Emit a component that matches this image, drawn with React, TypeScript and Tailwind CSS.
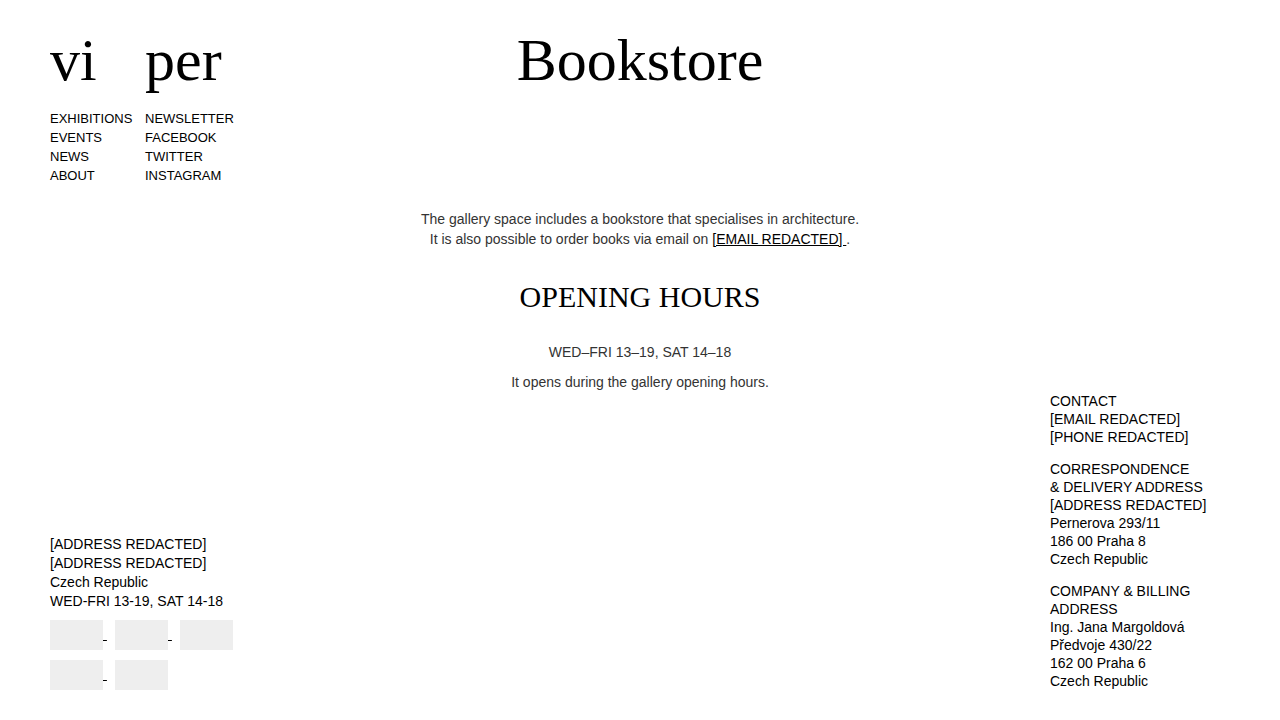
const sans = "font-['Liberation_Sans',Arial,sans-serif]";
const serif = "font-['Liberation_Serif','Times_New_Roman',serif]";

const menus = [
  { title: "vi", label: "Gallery", links: ["EXHIBITIONS", "EVENTS", "NEWS", "ABOUT"] },
  { title: "per", label: "Social", links: ["NEWSLETTER", "FACEBOOK", "TWITTER", "INSTAGRAM"] },
];

const contacts = [
  ["CONTACT", "[EMAIL REDACTED]", "[PHONE REDACTED]"],
  [
    "CORRESPONDENCE",
    "& DELIVERY ADDRESS",
    "[ADDRESS REDACTED]",
    "Pernerova 293/11",
    "186 00 Praha 8",
    "Czech Republic",
  ],
  [
    "COMPANY & BILLING",
    "ADDRESS",
    "Ing. Jana Margoldová",
    "Předvoje 430/22",
    "162 00 Praha 6",
    "Czech Republic",
  ],
];

const partnerRows = [3, 2];

function Menu({ title, label, links }: (typeof menus)[number]) {
  return (
    <nav aria-label={label} className="w-[95px]">
      <a href="#" className={`${serif} block text-[60px] leading-[60px]`}>
        {title}
      </a>
      <ul className="mt-[19px] text-[13px] leading-[19px]">
        {links.map((link) => (
          <li key={link}>
            <a href="#">{link}</a>
          </li>
        ))}
      </ul>
    </nav>
  );
}

function Partners({ count }: { count: number }) {
  return (
    <div className="flex">
      {Array.from({ length: count }, (_, i) => (
        <div key={i} className="h-[30px] w-[65px] text-sm leading-5 whitespace-pre">
          <a href="#" aria-label="Partner" className="underline">
            <span className="inline-block h-[30px] w-[53px] bg-[#eee] align-middle" />
            {i < count - 1 && " "}
          </a>
        </div>
      ))}
    </div>
  );
}

export default function App() {
  return (
    <div
      className={`${sans} grid min-h-screen grid-cols-[1fr_auto_1fr] bg-white px-[50px] py-[30px] text-sm text-black`}
    >
      <div className="flex flex-col justify-between">
        <div className="flex">
          {menus.map((menu) => (
            <Menu key={menu.title} {...menu} />
          ))}
        </div>
        <footer>
          <address className="leading-[19px] not-italic">
            <p>[ADDRESS REDACTED]</p>
            <p>[ADDRESS REDACTED]</p>
            <p>Czech Republic</p>
            <p>WED-FRI 13-19, SAT 14-18</p>
          </address>
          <div className="mt-[9px] flex flex-col gap-[10px]">
            {partnerRows.map((count, i) => (
              <Partners key={i} count={count} />
            ))}
          </div>
        </footer>
      </div>

      <main className="text-center leading-5 text-[#333]">
        <h1 className={`${serif} text-[60px] leading-[60px] text-black`}>Bookstore</h1>
        <p className="mt-[119px]">
          The gallery space includes a bookstore that specialises in architecture.
          <br />
          It is also possible to order books via email on{" "}
          <a href="#" className="whitespace-pre text-black underline">
            {"[EMAIL REDACTED] "}
          </a>
          .
        </p>
        <h2 className={`${serif} mt-7 text-[30px] leading-10 text-black`}>OPENING HOURS</h2>
        <p className="mt-[25px]">WED–FRI 13–19, SAT 14–18</p>
        <p className="mt-[10px]">It opens during the gallery opening hours.</p>
      </main>

      <aside className="flex w-[180px] flex-col gap-[14px] self-end justify-self-end leading-[18px]">
        {contacts.map((lines) => (
          <address key={lines[0]} className="not-italic">
            {lines.map((line) => (
              <p key={line}>{line}</p>
            ))}
          </address>
        ))}
      </aside>
    </div>
  );
}
